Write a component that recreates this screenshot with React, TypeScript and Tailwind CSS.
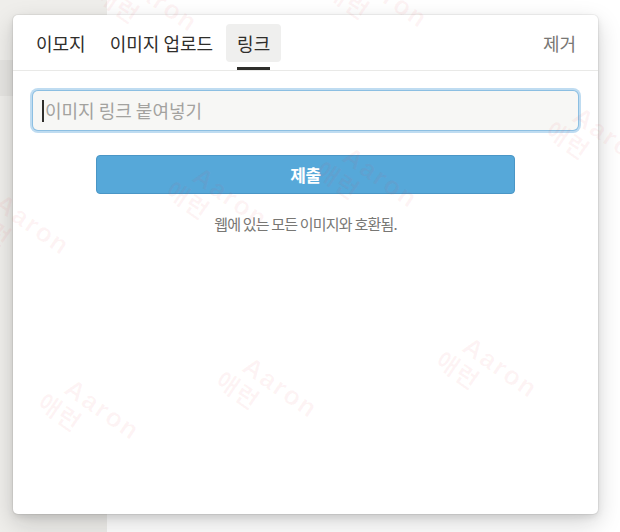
const KO = { fontFamily: '"Noto Sans CJK KR", "Noto Sans", sans-serif' };

const tabs = ['이모지', '이미지 업로드', '링크'];

// faint diagonal watermarks sitting over the page
const marks = [
  { left: 'left-[98px]', top: 'top-[-18px]' },
  { left: 'left-[328px]', top: 'top-[-22px]' },
  { left: 'left-[548px]', top: 'top-[118px]' },
  { left: 'left-[168px]', top: 'top-[178px]' },
  { left: 'left-[318px]', top: 'top-[158px]' },
  { left: 'left-[-30px]', top: 'top-[205px]' },
  { left: 'left-[40px]', top: 'top-[390px]' },
  { left: 'left-[218px]', top: 'top-[368px]' },
  { left: 'left-[438px]', top: 'top-[348px]' },
];

function Watermark({ left, top }: { left: string; top: string }) {
  return (
    <div
      className={`pointer-events-none absolute ${left} ${top} rotate-[35deg] select-none leading-[26px] font-bold text-[rgba(235,70,80,0.06)]`}
      style={{ fontFamily: '"Liberation Sans", "Noto Sans CJK KR", sans-serif' }}
    >
      <div className="pl-[14px] text-[26px] tracking-[2px]">Aaron</div>
      <div className="text-[24px] tracking-[1px]" style={KO}>
        애런
      </div>
    </div>
  );
}

export default function App() {
  return (
    <div className="relative flex h-[532px] w-[620px] overflow-hidden bg-white" style={KO}>
      {/* sidebar behind the popover */}
      <div className="flex w-[107px] flex-col bg-[#efeeeb]">
        <div className="h-[60px]" />
        <div className="h-[36px] bg-[#e6e5e2]" />
      </div>
      <div className="flex-1 bg-white" />

      {/* popover */}
      <div className="absolute left-[13px] top-[15px] flex h-[499px] w-[585px] flex-col rounded-[5px] bg-white shadow-[0_0_0_1px_rgba(15,15,15,0.05),0_3px_6px_rgba(15,15,15,0.1),0_9px_24px_rgba(15,15,15,0.18)]">
        <div className="flex h-[56px] items-stretch border-b border-[#e9e9e7] pl-[12px] pr-[11px]">
          <div className="flex gap-[2px]">
            {tabs.map((t, i) => {
              const active = i === tabs.length - 1;
              return (
                <div key={t} className="flex flex-col pt-[9px]">
                  <div
                    className={`flex h-[38px] items-center rounded-[4px] px-[11px] text-[18px] text-[#2f2e2b] ${
                      active ? 'bg-[#efefee]' : ''
                    }`}
                  >
                    {t}
                  </div>
                  <div className="flex-1" />
                  <div className={`mx-[11px] h-[3px] ${active ? 'bg-[#2f2e2b]' : ''}`} />
                </div>
              );
            })}
          </div>
          <div className="flex-1" />
          <div className="flex flex-col pt-[9px]">
            <div className="flex h-[38px] items-center px-[11px] text-[18px] text-[#787774]">
              제거
            </div>
          </div>
        </div>

        <div className="flex flex-col px-[20px] pt-[20px]">
          <div className="flex h-[39px] items-center rounded-[5px] bg-[#f7f7f5] px-[9px] shadow-[0_0_0_1px_#8cbfe2,0_0_0_3px_#bfdcf1]">
            <span className="mr-[1px] h-[22px] w-[2px] bg-[#2f2e2b]" />
            <span className="text-[18px] text-[#a3a29f]">이미지 링크 붙여넣기</span>
          </div>

          <div className="mt-[25px] flex justify-center">
            <button className="flex h-[39px] w-[419px] items-center justify-center rounded-[4px] border border-[#4a96c6] bg-[#56a8d9] text-[17px] font-bold tracking-[-0.5px] text-white">
              제출
            </button>
          </div>

          <div className="mt-[19px] text-center text-[15px] tracking-[-0.8px] text-[#787774]">
            웹에 있는 모든 이미지와 호환됨.
          </div>
        </div>
      </div>

      {marks.map((m, i) => (
        <Watermark key={i} left={m.left} top={m.top} />
      ))}
    </div>
  );
}
